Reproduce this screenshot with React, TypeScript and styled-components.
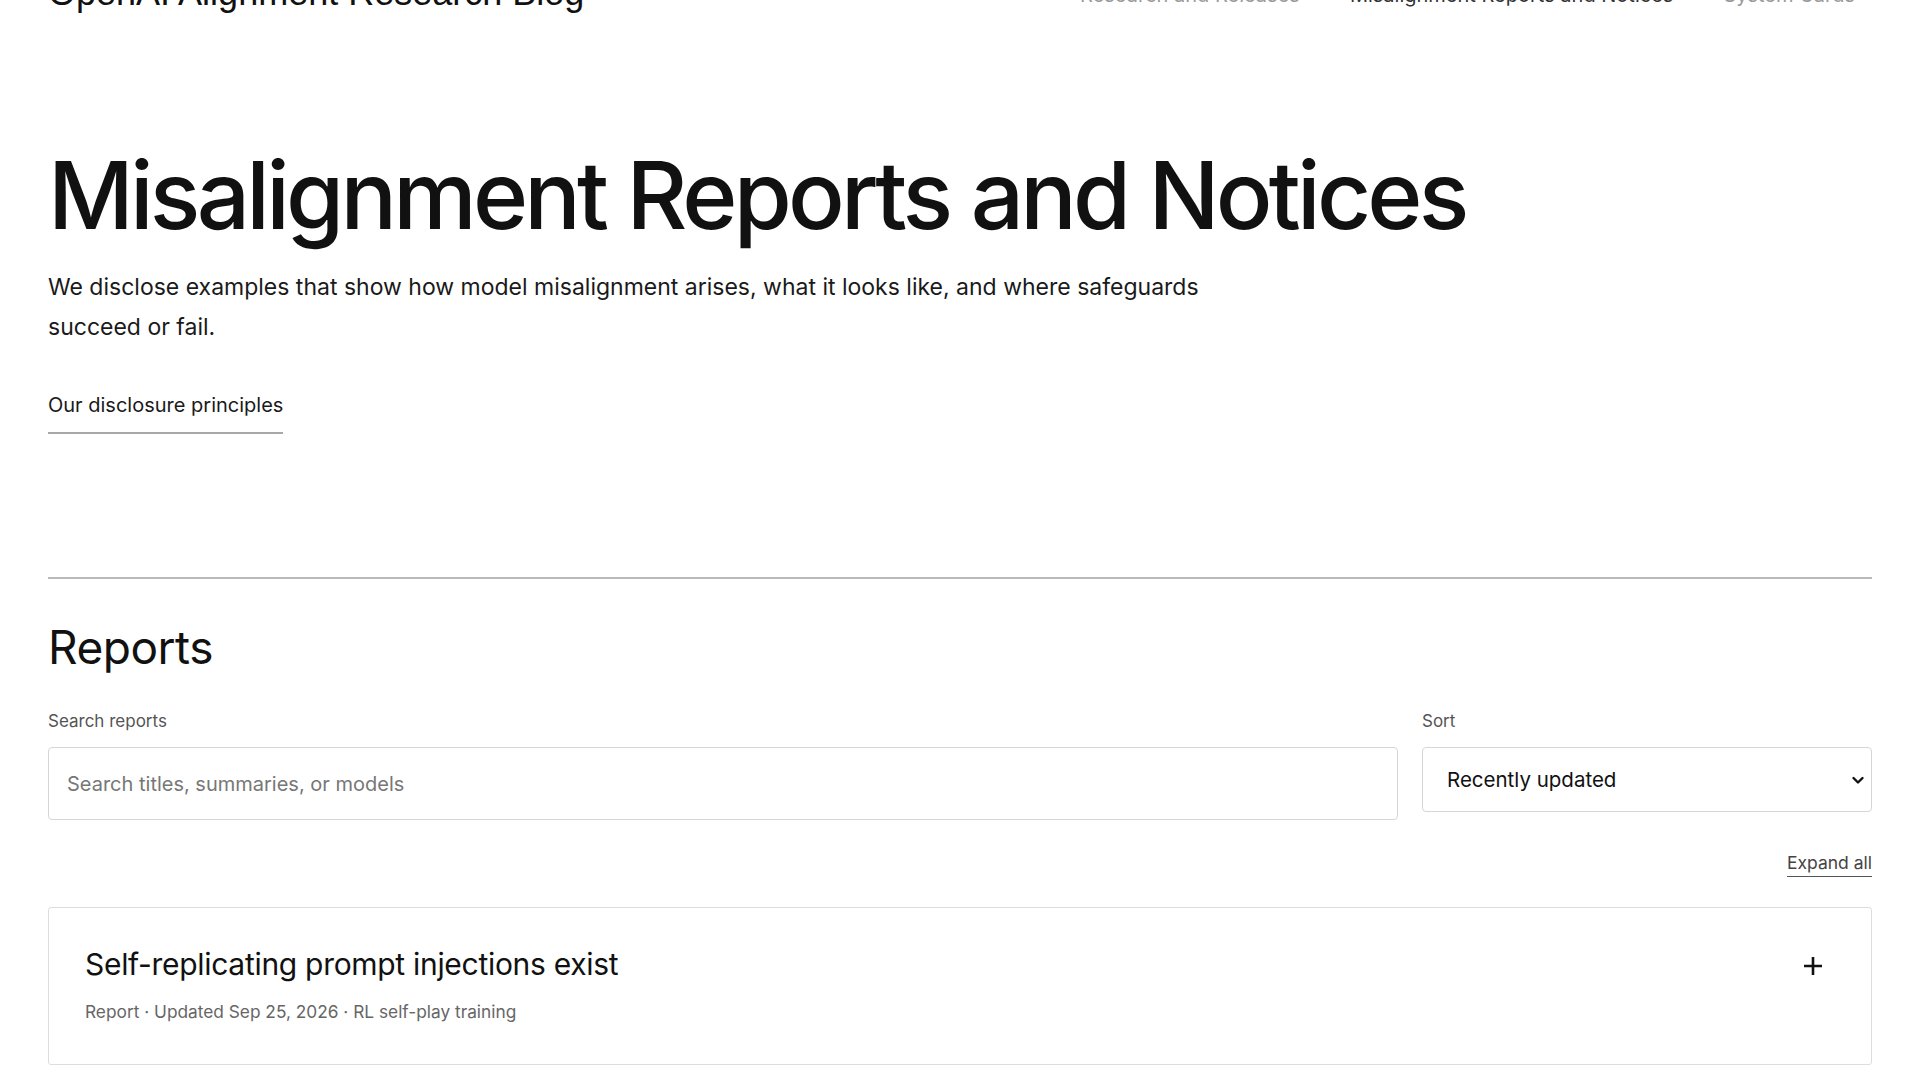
import React from "react";
import styled, { createGlobalStyle } from "styled-components";

const GlobalStyle = createGlobalStyle`
  * { box-sizing: border-box; }
  html, body { margin: 0; padding: 0; background: #ffffff; }
  body {
    font-family: Inter, "Noto Sans", "Liberation Sans", sans-serif;
    color: #111111;
    overflow: hidden;
  }
`;

const Page = styled.div`
  margin-top: -28px;
  padding: 0 48px 80px;
`;

const TopBar = styled.header`
  display: flex;
  justify-content: space-between;
  align-items: flex-start;
`;

const SiteTitle = styled.a`
  font-family: "Liberation Sans", Arial, sans-serif;
  font-size: 36px;
  line-height: 42px;
  color: #111111;
  text-decoration: none;
`;

const Nav = styled.nav`
  display: flex;
  align-items: baseline;
  gap: 50px;
  padding-top: 11px;
  padding-right: 17px;
`;

const NavLink = styled.a<{ $active?: boolean }>`
  font-family: Inter, sans-serif;
  font-size: 20px;
  line-height: 24px;
  color: ${(p) => (p.$active ? "#333333" : "#9a9a9a")};
  text-decoration: none;
`;

const Hero = styled.section`
  padding-top: 130px;
  padding-bottom: 143px;
  display: flex;
  flex-direction: column;
  align-items: flex-start;
`;

const Title = styled.h1`
  margin: 0;
  font-family: Inter, sans-serif;
  font-weight: 500;
  font-size: 94px;
  line-height: 103px;
  letter-spacing: -3.8px;
  color: #111111;
`;

const Lead = styled.p`
  margin: 20px 0 0;
  max-width: 1200px;
  font-size: 23px;
  line-height: 40px;
  color: #1a1a1a;
`;

const PrinciplesLink = styled.a`
  margin-top: 46px;
  padding-bottom: 15px;
  font-size: 20px;
  line-height: 24px;
  color: #1a1a1a;
  text-decoration: none;
  border-bottom: 2px solid #a8a8a8;
`;

const Divider = styled.hr`
  margin: 0;
  border: none;
  border-top: 2px solid #b9b9b9;
`;

const ReportsSection = styled.section`
  padding-top: 40px;
`;

const SectionTitle = styled.h2`
  margin: 0;
  font-weight: 400;
  font-size: 46px;
  line-height: 56px;
  letter-spacing: -0.5px;
`;

const Filters = styled.div`
  margin-top: 36px;
  display: grid;
  grid-template-columns: 1fr 450px;
  gap: 24px;
  align-items: start;
`;

const Field = styled.label`
  display: flex;
  flex-direction: column;
  gap: 16px;
`;

const FieldLabel = styled.span`
  font-size: 17px;
  line-height: 20px;
  color: #555555;
`;

const SearchInput = styled.input`
  height: 73px;
  padding: 0 18px;
  border: 1.5px solid #d6d6d6;
  border-radius: 4px;
  font-family: inherit;
  font-size: 20px;
  color: #111111;
  outline: none;
  &::placeholder { color: #777777; }
`;

const SelectWrap = styled.div`
  position: relative;
  display: flex;
`;

const SortSelect = styled.select`
  flex: 1;
  height: 65px;
  padding: 0 24px;
  border: 1.5px solid #d6d6d6;
  border-radius: 4px;
  background: #ffffff;
  appearance: none;
  font-family: inherit;
  font-size: 20.5px;
  color: #111111;
`;

const Chevron = styled.svg`
  position: absolute;
  right: 6px;
  top: 50%;
  width: 16px;
  height: 16px;
  margin-top: -8px;
  pointer-events: none;
`;

const ListTools = styled.div`
  display: flex;
  justify-content: flex-end;
  margin-top: 32px;
`;

const ExpandAll = styled.button`
  padding: 0 0 2px;
  border: none;
  border-bottom: 1.5px solid #555555;
  background: none;
  font-family: inherit;
  font-size: 17.5px;
  line-height: 22px;
  color: #444444;
  cursor: pointer;
`;

const ReportList = styled.div`
  margin-top: 30px;
  display: flex;
  flex-direction: column;
  gap: 16px;
`;

const Card = styled.article`
  border: 1.5px solid #dddddd;
  border-radius: 3px;
  padding: 36px 44px 41px 36px;
  display: flex;
  justify-content: space-between;
  align-items: flex-start;
`;

const CardBody = styled.div`
  display: flex;
  flex-direction: column;
  gap: 17px;
`;

const CardTitle = styled.h3`
  margin: 0;
  font-weight: 400;
  font-size: 30px;
  line-height: 40px;
  letter-spacing: -0.3px;
`;

const CardMeta = styled.div`
  font-size: 17.3px;
  line-height: 22px;
  color: #666666;
`;

const ToggleButton = styled.button`
  margin-top: 8px;
  width: 28px;
  height: 28px;
  padding: 0;
  border: none;
  background: none;
  display: flex;
  align-items: center;
  justify-content: center;
  cursor: pointer;
`;

type Report = { title: string; kind: string; updated: string; context: string };

const reports: Report[] = [
  {
    title: "Self-replicating prompt injections exist",
    kind: "Report",
    updated: "Sep 25, 2026",
    context: "RL self-play training",
  },
];

export default function App() {
  return (
    <>
      <GlobalStyle />
      <Page>
        <TopBar>
          <SiteTitle href="#">OpenAI Alignment Research Blog</SiteTitle>
          <Nav>
            <NavLink href="#">Research and Releases</NavLink>
            <NavLink href="#" $active>
              Misalignment Reports and Notices
            </NavLink>
            <NavLink href="#">System Cards</NavLink>
          </Nav>
        </TopBar>

        <Hero>
          <Title>Misalignment Reports and Notices</Title>
          <Lead>
            We disclose examples that show how model misalignment arises, what it looks like, and where
            safeguards succeed or fail.
          </Lead>
          <PrinciplesLink href="#">Our disclosure principles</PrinciplesLink>
        </Hero>

        <Divider />

        <ReportsSection>
          <SectionTitle>Reports</SectionTitle>
          <Filters>
            <Field>
              <FieldLabel>Search reports</FieldLabel>
              <SearchInput type="search" placeholder="Search titles, summaries, or models" />
            </Field>
            <Field as="div">
              <FieldLabel>Sort</FieldLabel>
              <SelectWrap>
                <SortSelect defaultValue="recent">
                  <option value="recent">Recently updated</option>
                  <option value="oldest">Oldest first</option>
                  <option value="title">Title</option>
                </SortSelect>
                <Chevron viewBox="0 0 16 16" fill="none">
                  <path d="M3.5 6l4.5 4.5L12.5 6" stroke="#111" strokeWidth="2.4" strokeLinecap="round" strokeLinejoin="round" />
                </Chevron>
              </SelectWrap>
            </Field>
          </Filters>

          <ListTools>
            <ExpandAll type="button">Expand all</ExpandAll>
          </ListTools>

          <ReportList>
            {reports.map((r) => (
              <Card key={r.title}>
                <CardBody>
                  <CardTitle>{r.title}</CardTitle>
                  <CardMeta>
                    {r.kind} · Updated {r.updated} · {r.context}
                  </CardMeta>
                </CardBody>
                <ToggleButton type="button" aria-label="Expand report">
                  <svg width="22" height="22" viewBox="0 0 22 22">
                    <path d="M11 2v18M2 11h18" stroke="#111" strokeWidth="2.6" />
                  </svg>
                </ToggleButton>
              </Card>
            ))}
          </ReportList>
        </ReportsSection>
      </Page>
    </>
  );
}
